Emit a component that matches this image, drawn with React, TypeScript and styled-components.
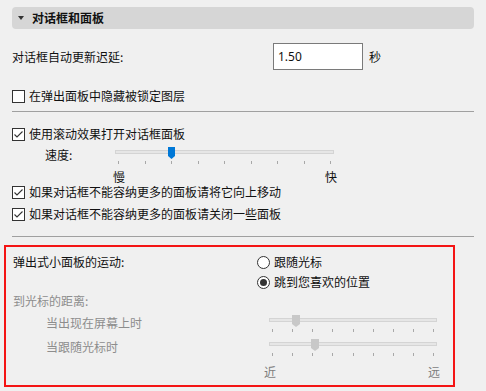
import React from "react";
import styled, { createGlobalStyle } from "styled-components";

const GlobalStyle = createGlobalStyle`
  html, body {
    margin: 0;
    padding: 0;
    background: #f0f0f0;
  }
  body {
    font-family: "Noto Sans CJK SC", "Noto Sans", sans-serif;
    font-size: 12px;
    color: #111;
  }
`;

const Page = styled.div`
  width: 486px;
  height: 391px;
  box-sizing: border-box;
  padding: 7px 12px 0 12px;
  display: flex;
  flex-direction: column;
  overflow: hidden;
`;

const Header = styled.div`
  height: 22px;
  border-radius: 4px;
  background: #d6d6d6;
  display: flex;
  align-items: center;
  padding-left: 6px;
  gap: 8px;
`;

const Caret = styled.span`
  width: 0;
  height: 0;
  border-left: 3px solid transparent;
  border-right: 3px solid transparent;
  border-top: 4px solid #333;
`;

const HeaderTitle = styled.span`
  font-weight: bold;
  line-height: 22px;
`;

const Row = styled.div<{ $mt?: number; $h?: number; $indent?: number }>`
  display: flex;
  align-items: center;
  margin-top: ${(p) => p.$mt ?? 0}px;
  height: ${(p) => p.$h ?? 18}px;
  padding-left: ${(p) => p.$indent ?? 0}px;
  line-height: 14px;
  white-space: nowrap;
`;

const Label = styled.span<{ $w?: number; $muted?: boolean }>`
  display: block;
  width: ${(p) => (p.$w ? `${p.$w}px` : "auto")};
  flex: none;
  color: ${(p) => (p.$muted ? "#8d8d8d" : "#111")};
`;

const NumberBox = styled.input`
  width: 90px;
  height: 27px;
  box-sizing: border-box;
  border: 1px solid #7a7a7a;
  background: #fff;
  padding: 0 0 0 4px;
  font-family: "Noto Sans", sans-serif;
  font-size: 12px;
  color: #111;
  outline: none;
`;

const Unit = styled.span`
  display: block;
  margin-left: 6px;
`;

const Divider = styled.div<{ $mt: number }>`
  margin-top: ${(p) => p.$mt}px;
  height: 1px;
  background: #a0a0a0;
  flex: none;
`;

const Box = styled.span`
  width: 13px;
  height: 13px;
  box-sizing: border-box;
  border: 1px solid #333;
  background: #fff;
  margin-right: 4px;
  display: flex;
  align-items: center;
  justify-content: center;
  flex: none;
`;

const Circle = styled(Box)`
  border-radius: 50%;
`;

const Dot = styled.span`
  width: 7px;
  height: 7px;
  border-radius: 50%;
  background: #333;
`;

const OptionText = styled.span`
  display: block;
  line-height: 14px;
`;

const Check = ({ checked, children }: { checked?: boolean; children: React.ReactNode }) => (
  <>
    <Box>
      {checked && (
        <svg width="11" height="11" viewBox="0 0 11 11">
          <polyline points="1.5,5.5 4,8 9.5,2.5" fill="none" stroke="#333" strokeWidth="1.1" />
        </svg>
      )}
    </Box>
    <OptionText>{children}</OptionText>
  </>
);

const Radio = ({ checked, children }: { checked?: boolean; children: React.ReactNode }) => (
  <>
    <Circle>{checked && <Dot />}</Circle>
    <OptionText>{children}</OptionText>
  </>
);

const SliderWrap = styled.div<{ $w: number }>`
  position: relative;
  width: ${(p) => p.$w}px;
  height: 24px;
  flex: none;
`;

const Track = styled.div`
  margin-top: 7px;
  height: 4px;
  box-sizing: border-box;
  border: 1px solid #d4d4d4;
  background: #e6e6e6;
`;

const Ticks = styled.div`
  margin-top: 7px;
  padding: 0 3px;
  display: flex;
  justify-content: space-between;
`;

const Tick = styled.span`
  width: 1px;
  height: 3px;
  background: #a8a8a8;
`;

const Thumb = styled.svg`
  position: absolute;
  top: 4px;
`;

const Slider = ({
  width,
  at,
  color,
  thumbW,
}: {
  width: number;
  at: number;
  color: string;
  thumbW: number;
}) => (
  <SliderWrap $w={width}>
    <Track />
    <Ticks>
      {Array.from({ length: 9 }).map((_, i) => (
        <Tick key={i} />
      ))}
    </Ticks>
    <Thumb width={thumbW} height={12} style={{ left: at }}>
      <polygon
        points={`0,0 ${thumbW},0 ${thumbW},9 ${thumbW / 2},12 0,9`}
        fill={color}
      />
    </Thumb>
  </SliderWrap>
);

const ScaleLabels = styled.div<{ $ml: number; $w: number; $mt: number; $muted?: boolean }>`
  display: flex;
  justify-content: space-between;
  margin-left: ${(p) => p.$ml}px;
  margin-top: ${(p) => p.$mt}px;
  width: ${(p) => p.$w}px;
  height: 12px;
  line-height: 12px;
  color: ${(p) => (p.$muted ? "#7d7d7d" : "#111")};

  span {
    display: block;
    height: 12px;
  }
`;

const Highlight = styled.section`
  margin-top: 8px;
  margin-left: -8px;
  width: 451px;
  height: 142px;
  box-sizing: border-box;
  border: 2px solid #f41414;
  padding: 5px 0 0 7px;
  display: flex;
  flex-direction: column;
`;

const TopRow = styled.div`
  display: flex;
`;

const TopLabel = styled.div`
  width: 244px;
  height: 20px;
  line-height: 20px;
`;

const RadioGroup = styled.div`
  display: flex;
  flex-direction: column;
`;

export default function App() {
  return (
    <>
      <GlobalStyle />
      <Page>
        <Header>
          <Caret />
          <HeaderTitle>对话框和面板</HeaderTitle>
        </Header>

        <Row $mt={14} $h={27}>
          <Label $w={261}>对话框自动更新迟延:</Label>
          <NumberBox defaultValue="1.50" readOnly />
          <Unit>秒</Unit>
        </Row>

        <Row $mt={17}>
          <Check>在弹出面板中隐藏被锁定图层</Check>
        </Row>
        <Divider $mt={6} />

        <Row $mt={13}>
          <Check checked>使用滚动效果打开对话框面板</Check>
        </Row>
        <Row $h={24} $indent={33}>
          <Label $w={70}>速度:</Label>
          <Slider width={219} at={53} color="#0078d7" thumbW={7} />
        </Row>
        <ScaleLabels $ml={101} $w={224} $mt={4}>
          <span>慢</span>
          <span>快</span>
        </ScaleLabels>
        <Row>
          <Check checked>如果对话框不能容纳更多的面板请将它向上移动</Check>
        </Row>
        <Row $mt={4}>
          <Check checked>如果对话框不能容纳更多的面板请关闭一些面板</Check>
        </Row>
        <Divider $mt={13} />

        <Highlight>
          <TopRow>
            <TopLabel>弹出式小面板的运动:</TopLabel>
            <RadioGroup>
              <Row $h={20}>
                <Radio>跟随光标</Radio>
              </Row>
              <Row $h={20}>
                <Radio checked>跳到您喜欢的位置</Radio>
              </Row>
            </RadioGroup>
          </TopRow>
          <Row>
            <Label $muted>到光标的距离:</Label>
          </Row>
          <Row $h={24} $indent={33} $mt={1}>
            <Label $w={223} $muted>
              当出现在屏幕上时
            </Label>
            <Slider width={168} at={23} color="#c8c8c8" thumbW={8} />
          </Row>
          <Row $h={24} $indent={33}>
            <Label $w={223} $muted>
              当跟随光标时
            </Label>
            <Slider width={168} at={42} color="#c8c8c8" thumbW={8} />
          </Row>
          <ScaleLabels $ml={251} $w={176} $mt={7} $muted>
            <span>近</span>
            <span>远</span>
          </ScaleLabels>
        </Highlight>
      </Page>
    </>
  );
}
